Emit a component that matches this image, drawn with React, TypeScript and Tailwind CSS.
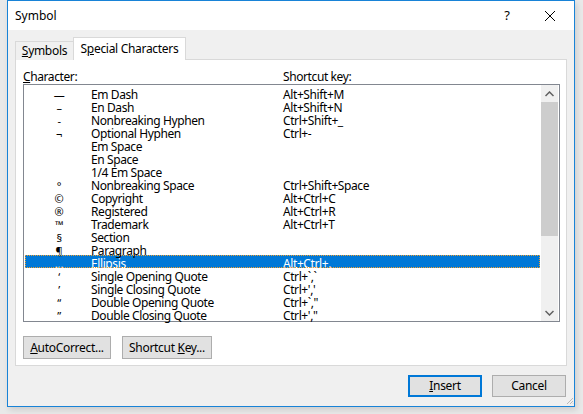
import React from 'react';

const rows: [string, string, string][] = [
    ['\u2014', 'Em Dash', 'Alt+Shift+M'],
    ['\u2013', 'En Dash', 'Alt+Shift+N'],
    ['-', 'Nonbreaking Hyphen', 'Ctrl+Shift+_'],
    ['\u00ac', 'Optional Hyphen', 'Ctrl+-'],
    ['', 'Em Space', ''],
    ['', 'En Space', ''],
    ['', '1/4 Em Space', ''],
    ['\u00b0', 'Nonbreaking Space', 'Ctrl+Shift+Space'],
    ['\u00a9', 'Copyright', 'Alt+Ctrl+C'],
    ['\u00ae', 'Registered', 'Alt+Ctrl+R'],
    ['\u2122', 'Trademark', 'Alt+Ctrl+T'],
    ['\u00a7', 'Section', ''],
    ['\u00b6', 'Paragraph', ''],
    ['\u2026', 'Ellipsis', 'Alt+Ctrl+.'],
    ['\u2018', 'Single Opening Quote', 'Ctrl+`,`'],
    ['\u2019', 'Single Closing Quote', "Ctrl+','"],
    ['\u201c', 'Double Opening Quote', 'Ctrl+`,"'],
    ['\u201d', 'Double Closing Quote', "Ctrl+',\""],
];

const SELECTED = 13;

function Btn({ children, primary }: { children: React.ReactNode; primary?: boolean }) {
    return (
        <button
            className={
                primary
                    ? 'h-[22px] w-[74px] bg-[#e1e1e1] border-2 border-[#0078d7] text-[12px] tracking-[-0.3px] leading-none text-black'
                    : 'h-[22px] w-[74px] bg-[#e1e1e1] border border-[#adadad] text-[12px] tracking-[-0.3px] leading-none text-black'
            }
        >
            {children}
        </button>
    );
}

export default function App() {
    return (
        <div
            className="w-[583px] h-[414px] bg-[#e9e9e9] pl-[7px] overflow-hidden"
            style={{ fontFamily: '"Noto Sans", "Open Sans", sans-serif' }}
        >
            {/* window */}
            <div className="w-[568px] h-[407px] border border-[#1883d7] bg-[#f0f0f0] flex flex-col shadow-[2px_3px_6px_rgba(0,0,0,0.12)]">
                {/* title bar */}
                <div className="h-[30px] bg-white flex items-center pl-[7px] text-[12px] text-black">
                    <span className="flex-1">Symbol</span>
                    <span className="w-[14px] text-center mr-[30px] text-[13px]">?</span>
                    <svg width="12" height="12" viewBox="0 0 12 12" className="mr-[18px]">
                        <path d="M1 1 L11 11 M11 1 L1 11" stroke="#000" strokeWidth="1" />
                    </svg>
                </div>

                {/* body */}
                <div className="flex-1 flex flex-col pl-[7px] pr-[7px] pt-[7px]">
                    {/* tabs */}
                    <div className="flex items-end h-[23px] relative z-10 text-[12px] tracking-[-0.3px] text-black">
                        <div className="h-[19px] w-[59px] border border-b-0 border-[#d9d9d9] bg-[#f0f0f0] flex items-center justify-center">
                            <span><u>S</u>ymbols</span>
                        </div>
                        <div className="h-[23px] w-[113px] border border-b-0 border-[#d9d9d9] bg-white flex items-center justify-center -ml-px pb-[1px]">
                            <span>S<u>p</u>ecial Characters</span>
                        </div>
                    </div>

                    {/* panel */}
                    <div className="h-[307px] -mt-px border border-[#d9d9d9] bg-white flex flex-col pl-[7px] pr-[6px] pt-[7px]">
                        <div className="flex h-[17px] text-[12px] tracking-[-0.4px] text-black items-center pt-[2px]">
                            <span className="w-[260px]"><u>C</u>haracter:</span>
                            <span>Shortcut key:</span>
                        </div>

                        {/* list */}
                        <div className="h-[238px] w-[537px] border border-[#828790] flex">
                            <div className="flex-1 pt-px pl-px pr-px">
                                {rows.map((r, i) => {
                                    const sel = i === SELECTED;
                                    return (
                                        <div
                                            key={r[1]}
                                            className={
                                                sel
                                                    ? 'h-[13px] flex items-start text-[12px] tracking-[-0.4px] leading-[17px] bg-[#0078d7] text-white outline outline-1 outline-dotted outline-offset-[-1px] outline-[#f0a030]'
                                                    : 'h-[13px] flex items-start text-[12px] tracking-[-0.4px] leading-[17px] text-black'
                                            }
                                        >
                                            <span className="w-[66px] text-center pl-[2px] text-[11px]">{r[0]}</span>
                                            <span className="w-[192px] whitespace-nowrap">{r[1]}</span>
                                            <span className="whitespace-nowrap">{r[2]}</span>
                                        </div>
                                    );
                                })}
                            </div>
                            {/* scrollbar */}
                            <div className="w-[17px] bg-[#f0f0f0] flex flex-col mr-px">
                                <div className="h-[17px] flex items-center justify-center">
                                    <svg width="9" height="6" viewBox="0 0 9 6">
                                        <path d="M0.5 5 L4.5 1 L8.5 5" stroke="#606060" strokeWidth="1.5" fill="none" />
                                    </svg>
                                </div>
                                <div className="h-[134px] bg-[#cdcdcd]" />
                                <div className="flex-1" />
                                <div className="h-[17px] flex items-center justify-center">
                                    <svg width="9" height="6" viewBox="0 0 9 6">
                                        <path d="M0.5 1 L4.5 5 L8.5 1" stroke="#606060" strokeWidth="1.5" fill="none" />
                                    </svg>
                                </div>
                            </div>
                        </div>

                        {/* panel buttons */}
                        <div className="flex gap-[11px] mt-[14px]">
                            <button className="h-[23px] w-[88px] bg-[#e1e1e1] border border-[#adadad] text-[12px] tracking-[-0.3px] leading-none text-black">
                                <u>A</u>utoCorrect...
                            </button>
                            <button className="h-[23px] w-[90px] bg-[#e1e1e1] border border-[#adadad] text-[12px] tracking-[-0.3px] leading-none text-black">
                                Shortcut <u>K</u>ey...
                            </button>
                        </div>
                    </div>

                    {/* dialog buttons */}
                    <div className="flex justify-end gap-[10px] mt-[9px] pr-px">
                        <Btn primary>
                            <u>I</u>nsert
                        </Btn>
                        <Btn>Cancel</Btn>
                    </div>

                    <div className="flex justify-end mt-auto">
                        <svg width="8" height="8" viewBox="0 0 8 8" className="-mr-[7px] mb-px">
                            <path d="M7 1 L1 7 M7 4 L4 7 M7 6.5 L6.5 7" stroke="#b8b8b8" strokeWidth="1" />
                        </svg>
                    </div>
                </div>
            </div>
        </div>
    );
}
